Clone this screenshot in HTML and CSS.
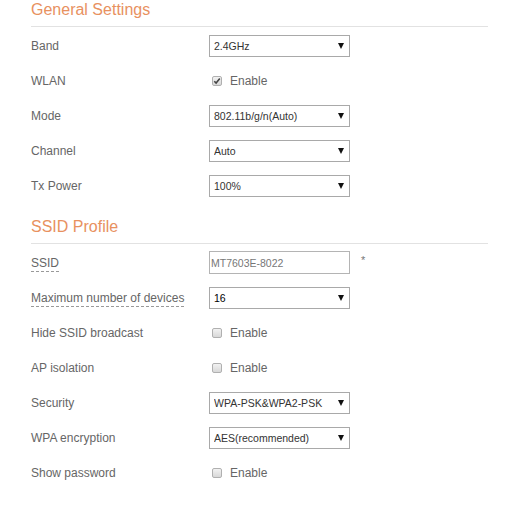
FILE: index.html
```html
<!DOCTYPE html>
<html lang="en">
<head>
    <meta charset="UTF-8">
    <meta name="viewport" content="width=device-width, initial-scale=1.0">
    <title>Wireless Settings</title>
    <link rel="stylesheet" href="styles.css">
</head>
<body>

<div class="page">
    <h2 class="section-title">General Settings</h2>
    <div class="section">
        <div class="form-row">
            <label class="row-label">Band</label>
            <div class="select-wrap">
                <select><option>2.4GHz</option><option>5GHz</option></select>
            </div>
        </div>
        <div class="form-row">
            <label class="row-label">WLAN</label>
            <span class="check checked"><svg width="8" height="8" viewBox="0 0 8 8"><path d="M1.3 4.2 L3.1 6 L6.8 1.6" fill="none" stroke="#444" stroke-width="1.6"/></svg></span>
            <span class="check-text">Enable</span>
        </div>
        <div class="form-row">
            <label class="row-label">Mode</label>
            <div class="select-wrap">
                <select><option>802.11b/g/n(Auto)</option></select>
            </div>
        </div>
        <div class="form-row">
            <label class="row-label">Channel</label>
            <div class="select-wrap">
                <select><option>Auto</option></select>
            </div>
        </div>
        <div class="form-row">
            <label class="row-label">Tx Power</label>
            <div class="select-wrap">
                <select><option>100%</option></select>
            </div>
        </div>
    </div>

    <h2 class="section-title second">SSID Profile</h2>
    <div class="section">
        <div class="form-row">
            <label class="row-label"><span class="hint">SSID</span></label>
            <input type="text" class="text-input" value="MT7603E-8022">
            <span class="required">*</span>
        </div>
        <div class="form-row">
            <label class="row-label"><span class="hint">Maximum number of devices</span></label>
            <div class="select-wrap">
                <select class="dark"><option>16</option></select>
            </div>
        </div>
        <div class="form-row">
            <label class="row-label">Hide SSID broadcast</label>
            <span class="check"></span>
            <span class="check-text">Enable</span>
        </div>
        <div class="form-row">
            <label class="row-label">AP isolation</label>
            <span class="check"></span>
            <span class="check-text">Enable</span>
        </div>
        <div class="form-row">
            <label class="row-label">Security</label>
            <div class="select-wrap">
                <select><option>WPA-PSK&amp;WPA2-PSK</option></select>
            </div>
        </div>
        <div class="form-row">
            <label class="row-label">WPA encryption</label>
            <div class="select-wrap">
                <select><option>AES(recommended)</option></select>
            </div>
        </div>
        <div class="form-row">
            <label class="row-label">Show password</label>
            <span class="check"></span>
            <span class="check-text">Enable</span>
        </div>
    </div>
</div>

</body>
</html>
```

FILE: styles.css
```css
body {
    margin: 0;
    background-color: #fff;
    font-family: "Liberation Sans", Arial, sans-serif;
    color: #666;
}
.page {
    width: 457px;
    padding-left: 31px;
}
.section-title {
    margin: 0;
    font-size: 16px;
    font-weight: normal;
    line-height: 20px;
    padding-bottom: 6px;
    color: #e8915f;
    border-bottom: 1px solid #e2e2e2;
}
.section-title.second {
    margin-top: 14px;
}
.section {
    padding-top: 1px;
}
.form-row {
    display: flex;
    align-items: center;
    height: 35px;
    font-size: 12px;
}
.row-label {
    width: 178px;
    flex-shrink: 0;
    color: #666;
}
.hint {
    border-bottom: 1px dashed #999;
    padding-bottom: 1px;
}
.select-wrap {
    position: relative;
    width: 141px;
    height: 22px;
}
.select-wrap select {
    appearance: none;
    -webkit-appearance: none;
    width: 100%;
    height: 100%;
    margin: 0;
    padding: 0 0 0 4px;
    border: 1px solid #a9a9a9;
    border-radius: 0;
    background-color: #fff;
    font-family: "Liberation Sans", Arial, sans-serif;
    font-size: 10.5px;
    color: #333;
}
.select-wrap select.dark {
    color: #000;
}
.select-wrap::after {
    content: "";
    position: absolute;
    right: 6px;
    top: 8px;
    border-left: 3px solid transparent;
    border-right: 3px solid transparent;
    border-top: 6px solid #111;
    pointer-events: none;
}
.text-input {
    box-sizing: border-box;
    width: 141px;
    height: 23px;
    margin: 0;
    padding: 0 0 0 1px;
    border: 1px solid #b4b4b4;
    font-family: "Liberation Sans", Arial, sans-serif;
    font-size: 10.5px;
    color: #777;
}
.required {
    margin-left: 11px;
    margin-top: -6px;
    font-size: 11px;
    color: #777;
}
.check {
    box-sizing: border-box;
    display: inline-flex;
    align-items: center;
    justify-content: center;
    width: 10px;
    height: 10px;
    margin-left: 3px;
    border: 1px solid #b0b0b0;
    border-radius: 2px;
    background: linear-gradient(#f2f2f2, #d8d8d8);
}
.check-text {
    margin-left: 8px;
    color: #666;
}
```
